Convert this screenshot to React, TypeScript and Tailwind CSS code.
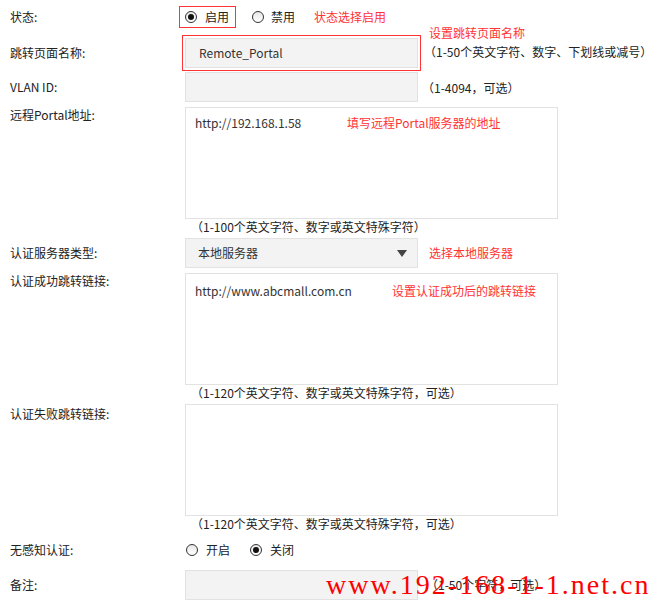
import React from "react";

const font = { fontFamily: '"Noto Sans CJK SC", "Noto Sans", sans-serif' };

function Radio({ checked }: { checked?: boolean }) {
	return (
		<span className="flex items-center justify-center w-[12px] h-[12px] rounded-full border border-[#333] bg-gradient-to-b from-[#e8e8e8] to-white">
			{checked && <span className="w-[6px] h-[6px] rounded-full bg-[#111]" />}
		</span>
	);
}

function Label({ children }: { children: React.ReactNode }) {
	return <div className="w-[185px] pl-[10px] shrink-0">{children}</div>;
}

const inputCls =
	"w-[233px] h-[30px] border border-[#e2e2e2] bg-[#f3f3f3] flex items-center text-[#333]";
const areaCls = "w-[373px] h-[112px] border border-[#e2e2e2] bg-white pl-[9px] pt-[7px] text-[#333] relative";

export default function App() {
	return (
		<div className="relative w-[660px] h-[607px] bg-white text-[12px] leading-[16px] text-[#222] overflow-hidden" style={font}>
			<div className="flex flex-col pt-[6px]">
				{/* 状态 */}
				<div className="flex items-center h-[22px]">
					<Label>状态:</Label>
					<div className="flex items-center -ml-[6px] h-[22px] border border-[#f33] pl-[5px] pr-[6px] gap-[8px]">
						<Radio checked />
						<span>启用</span>
					</div>
					<div className="flex items-center ml-[16px] gap-[7px]">
						<Radio />
						<span>禁用</span>
					</div>
					<span className="ml-[19px] text-[#f33]">状态选择启用</span>
				</div>

				{/* 跳转页面名称 */}
				<div className="flex items-center mt-[7px] h-[35px] relative">
					<Label>跳转页面名称:</Label>
					<div className="-ml-[3px] border border-[#f33] p-[2px]">
						<div className={`${inputCls} pl-[13px]`}>Remote_Portal</div>
					</div>
					<span className="absolute left-[429px] -top-[10px] text-[#f33]">设置跳转页面名称</span>
					<span className="ml-[3px] -mt-[2px]">（1-50个英文字符、数字、下划线或减号）</span>
				</div>

				{/* VLAN */}
				<div className="flex items-center mt-[2px] h-[30px]">
					<Label>VLAN ID:</Label>
					<div className={inputCls} />
					<span className="ml-[4px] mt-[2px]">（1-4094，可选）</span>
				</div>

				{/* 远程Portal */}
				<div className="flex mt-[5px]">
					<Label>远程Portal地址:</Label>
					<div className={areaCls}>
						http://192.168.1.58
						<span className="absolute left-[161px] top-[7px] text-[#f33]">填写远程Portal服务器的地址</span>
					</div>
				</div>
				<div className="pl-[191px] h-[16px]">（1-100个英文字符、数字或英文特殊字符）</div>

				{/* 认证服务器类型 */}
				<div className="flex items-center mt-[3px] h-[30px]">
					<Label>认证服务器类型:</Label>
					<div className={`${inputCls} pl-[12px] justify-between pr-[10px]`}>
						<span>本地服务器</span>
						<svg width="10" height="7" viewBox="0 0 10 7">
							<path d="M0 0 H10 L5 7 Z" fill="#444" />
						</svg>
					</div>
					<span className="ml-[11px] text-[#f33]">选择本地服务器</span>
				</div>

				{/* 认证成功跳转链接 */}
				<div className="flex mt-[5px]">
					<Label>认证成功跳转链接:</Label>
					<div className={`${areaCls} pt-[9px]`}>
						http://www.abcmall.com.cn
						<span className="absolute left-[206px] top-[9px] text-[#f33]">设置认证成功后的跳转链接</span>
					</div>
				</div>
				<div className="pl-[191px] h-[16px]">（1-120个英文字符、数字或英文特殊字符，可选）</div>

				{/* 认证失败跳转链接 */}
				<div className="flex mt-[3px]">
					<Label>
						<div className="pt-[2px]">认证失败跳转链接:</div>
					</Label>
					<div className={areaCls} />
				</div>
				<div className="pl-[191px] h-[16px]">（1-120个英文字符、数字或英文特殊字符，可选）</div>

				{/* 无感知认证 */}
				<div className="flex items-center mt-[6px] h-[24px]">
					<Label>无感知认证:</Label>
					<div className="flex items-center ml-[1px] gap-[8px]">
						<Radio />
						<span>开启</span>
					</div>
					<div className="flex items-center ml-[20px] gap-[8px]">
						<Radio checked />
						<span>关闭</span>
					</div>
				</div>

				{/* 备注 */}
				<div className="flex items-center mt-[8px] h-[30px]">
					<Label>备注:</Label>
					<div className={inputCls} />
					<span className="ml-[8px]">（1-50个字符，可选）</span>
				</div>
			</div>

			<div
				className="absolute left-[326px] top-[569px] text-[28px] leading-[32px] text-[#f00] tracking-[2px] whitespace-nowrap"
				style={{ fontFamily: '"Liberation Serif", serif' }}
			>
				www.192-168-1-1.net.cn
			</div>
		</div>
	);
}
